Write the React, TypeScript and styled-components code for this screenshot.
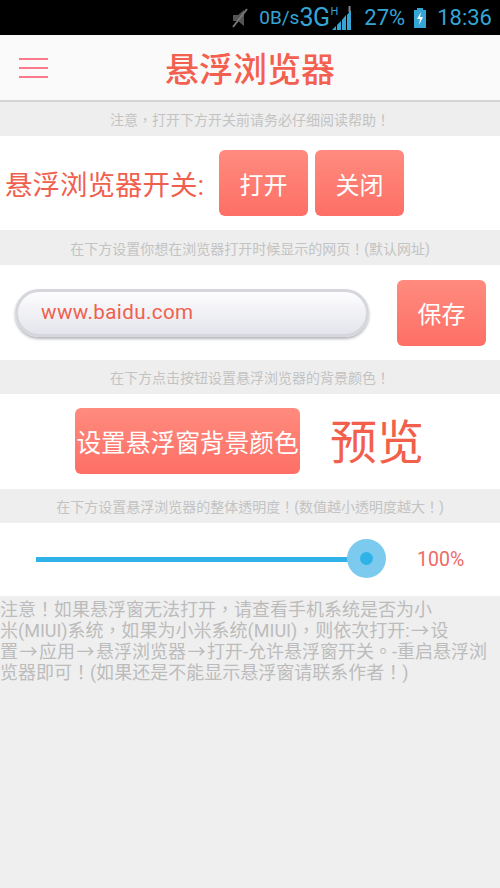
import React from 'react';
import styled, { createGlobalStyle } from 'styled-components';

const Global = createGlobalStyle`
  html, body { margin: 0; padding: 0; background: #efefef; }
  body { font-family: Roboto, "Noto Sans CJK TC", sans-serif; }
`;

const Page = styled.div`
  width: 500px;
  height: 888px;
  overflow: hidden;
  background: #efefef;
  display: flex;
  flex-direction: column;
`;

const StatusBar = styled.div`
  height: 35px;
  background: #000;
  color: #35a5d6;
  display: flex;
  align-items: center;
  justify-content: flex-end;
  padding: 0 8px 0 0;
  font-size: 20px;
  flex-shrink: 0;
`;

const Speed = styled.span`
  font-size: 19px;
  margin-left: 7px;
`;

const Net = styled.span`
  font-size: 25px;
  letter-spacing: -0.5px;
`;

const NetH = styled.span`
  font-size: 11px;
  align-self: flex-start;
  margin: 5px 0 0 1px;
`;

const Percent = styled.span`
  margin-left: 12px;
  font-size: 22px;
`;

const Clock = styled.span`
  margin-left: 10px;
  font-size: 22px;
`;

const Header = styled.div`
  height: 67px;
  background: #fafafa;
  border-bottom: 2px solid #d4d4d4;
  box-sizing: border-box;
  position: relative;
  display: flex;
  align-items: center;
  justify-content: center;
  flex-shrink: 0;
`;

const Menu = styled.div`
  position: absolute;
  left: 19px;
  top: 23px;
  width: 29px;
  height: 20px;
  display: flex;
  flex-direction: column;
  justify-content: space-between;
  span {
    height: 2px;
    background: #fb7a8c;
  }
`;

const Title = styled.div`
  font-size: 34px;
  font-weight: 500;
  color: #f4604f;
`;

const Notice = styled.div<{ $h: number }>`
  height: ${p => p.$h}px;
  background: #eeeeee;
  color: #c3c3c3;
  font-size: 14px;
  display: flex;
  align-items: center;
  justify-content: center;
  flex-shrink: 0;
`;

const Row = styled.div<{ $h: number }>`
  height: ${p => p.$h}px;
  background: #fff;
  display: flex;
  align-items: center;
  flex-shrink: 0;
`;

const SwitchLabel = styled.div`
  font-size: 27.5px;
  color: #f0604e;
  margin-left: 5px;
  width: 214px;
  white-space: nowrap;
`;

const Btn = styled.div<{ $w: number; $fs: number }>`
  width: ${p => p.$w}px;
  height: 66px;
  border-radius: 6px;
  background: linear-gradient(#ff8b7e, #fd6f66);
  color: #fff;
  font-size: ${p => p.$fs}px;
  display: flex;
  align-items: center;
  justify-content: center;
  white-space: nowrap;
  flex-shrink: 0;
`;

const SwitchButtons = styled.div`
  display: flex;
  gap: 7px;
`;

const UrlBox = styled.div`
  width: 354px;
  height: 48px;
  margin: 0 28px 0 15px;
  border: 3px solid #d6d7dc;
  border-radius: 24px;
  background: linear-gradient(#fdfdfe, #e4e5ec);
  box-shadow: 0 2px 3px #b4b5ba;
  color: #f0604e;
  font-size: 20.6px;
  display: flex;
  align-items: center;
  padding: 0 0 1px 23px;
  box-sizing: border-box;
  letter-spacing: 0.4px;
`;

const ColorRow = styled(Row)`
  padding: 0 0 2px 75px;
  box-sizing: border-box;
`;

const Preview = styled.div`
  font-size: 47px;
  color: #f2604c;
  margin: -4px 0 0 30px;
`;

const SliderWrap = styled.div`
  position: relative;
  width: 331px;
  height: 5px;
  margin-left: 36px;
  background: #2fb2e8;
`;

const Thumb = styled.div`
  position: absolute;
  right: -19px;
  top: -18px;
  width: 39px;
  height: 39px;
  border-radius: 50%;
  background: #7ccbee;
  display: flex;
  align-items: center;
  justify-content: center;
  &::after {
    content: '';
    width: 13px;
    height: 13px;
    border-radius: 50%;
    background: #2fb2e8;
  }
`;

const Value = styled.div`
  font-size: 19.5px;
  color: #ee6a66;
  margin-left: 50px;
`;

const Help = styled.div`
  color: #bcbcbc;
  font-size: 18px;
  line-height: 21px;
  padding-top: 3px;
  white-space: nowrap;
`;

const Arrow = styled.span`
  margin: 0 1.5px;
`;

const App: React.FC = () => {
  return (
    <Page>
      <Global />
      <StatusBar>
        <svg width="24" height="24" viewBox="0 0 24 24">
          <path d="M5 9h5l6-5v16l-6-5H5z" fill="#555" />
          <path d="M5 21L19 3" stroke="#777" strokeWidth="2" />
        </svg>
        <Speed>0B/s</Speed>
        <Net>3G</Net>
        <NetH>H</NetH>
        <svg width="22" height="28" viewBox="0 0 22 28" style={{ marginLeft: -8 }}>
          <path d="M2 26h4v-4zM7 26h4v-9l-4 4zM12 26h4V11l-4 5zM17 26h4V6l-4 5z" fill="#35a5d6" />
          <path d="M18.5 2h2v6h-2z" fill="#888" />
        </svg>
        <Percent>27%</Percent>
        <svg width="14" height="22" viewBox="0 0 14 22" style={{ marginLeft: 8 }}>
          <path d="M4 1h6v2h3v18H1V3h3z" fill="#35a5d6" />
          <path d="M8 5L4 12h3l-1 6 4-8H7z" fill="#fff" />
        </svg>
        <Clock>18:36</Clock>
      </StatusBar>
      <Header>
        <Menu>
          <span />
          <span />
          <span />
        </Menu>
        <Title>悬浮浏览器</Title>
      </Header>
      <Notice $h={34}>注意，打开下方开关前请务必仔细阅读帮助！</Notice>
      <Row $h={94}>
        <SwitchLabel>悬浮浏览器开关:</SwitchLabel>
        <SwitchButtons>
          <Btn $w={89} $fs={24}>打开</Btn>
          <Btn $w={89} $fs={24}>关闭</Btn>
        </SwitchButtons>
      </Row>
      <Notice $h={35}>在下方设置你想在浏览器打开时候显示的网页！(默认网址)</Notice>
      <Row $h={95}>
        <UrlBox>www.baidu.com</UrlBox>
        <Btn $w={89} $fs={24}>保存</Btn>
      </Row>
      <Notice $h={34}>在下方点击按钮设置悬浮浏览器的背景颜色！</Notice>
      <ColorRow $h={95}>
        <Btn $w={225} $fs={24.7}>设置悬浮窗背景颜色</Btn>
        <Preview>预览</Preview>
      </ColorRow>
      <Notice $h={34}>在下方设置悬浮浏览器的整体透明度！(数值越小透明度越大！)</Notice>
      <Row $h={73}>
        <SliderWrap>
          <Thumb />
        </SliderWrap>
        <Value>100%</Value>
      </Row>
      <Help>
        注意！如果悬浮窗无法打开，请查看手机系统是否为小
        <br />
        米(MIUI)系统，如果为小米系统(MIUI)，则依次打开:<Arrow>→</Arrow>设
        <br />
        置<Arrow>→</Arrow>应用<Arrow>→</Arrow>悬浮浏览器<Arrow>→</Arrow>打开-允许悬浮窗开关。-重启悬浮浏
        <br />
        览器即可！(如果还是不能显示悬浮窗请联系作者！)
      </Help>
    </Page>
  );
};

export default App;
